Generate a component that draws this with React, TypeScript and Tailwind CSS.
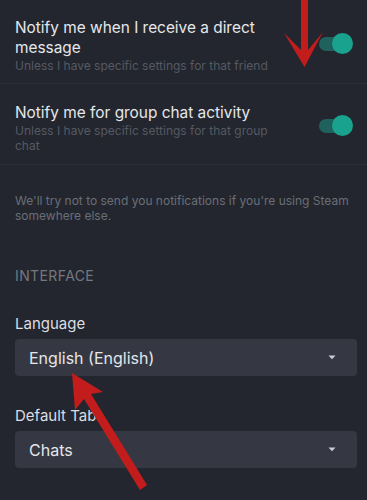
import React from "react";

function Toggle() {
  return (
    <div className="relative w-[34px] h-[22px] shrink-0">
      <div className="absolute left-0 top-[4px] w-[30px] h-[14px] rounded-full bg-[#1f615c]" />
      <div className="absolute right-0 top-0 w-[21px] h-[21px] rounded-full bg-[#19a28d]" />
    </div>
  );
}

function Chevron() {
  return (
    <svg width="8" height="5" viewBox="0 0 8 5" className="shrink-0">
      <path d="M0.5 0.5 L4 4.2 L7.5 0.5 Z" fill="#c9ccd2" />
    </svg>
  );
}

function Select({ label }: { label: string }) {
  return (
    <div className="h-[37px] rounded-[4px] bg-[#353842] flex items-center justify-between pl-[14px] pr-[21px]">
      <span className="text-[16px] text-[#e4e6ea]">{label}</span>
      <Chevron />
    </div>
  );
}

export default function App() {
  return (
    <div
      className="relative w-[367px] h-[500px] overflow-hidden bg-[#23262e]"
      style={{ fontFamily: 'Inter, "Noto Sans", sans-serif' }}
    >
      <div className="flex flex-col">
        <div className="flex items-start justify-between pl-[15px] pr-[14px] pt-[18px] pb-[10px] border-b border-[#2c2f37]">
          <div className="flex flex-col w-[290px]">
            <div className="text-[15.4px] leading-[20px] text-[#e6e7ea]">Notify me when I receive a direct message</div>
            <div className="text-[12px] leading-[15px] text-[#555962]">Unless I have specific settings for that friend</div>
          </div>
          <div className="mt-[15px]"><Toggle /></div>
        </div>
        <div className="flex items-start justify-between pl-[15px] pr-[14px] pt-[19px] pb-[11px] border-b border-[#2c2f37]">
          <div className="flex flex-col w-[262px]">
            <div className="text-[15.4px] leading-[20px] text-[#e6e7ea]">Notify me for group chat activity</div>
            <div className="text-[12px] leading-[15px] text-[#555962]">Unless I have specific settings for that group chat</div>
          </div>
          <div className="mt-[12px]"><Toggle /></div>
        </div>
        <div className="px-[15px] pt-[28px] text-[12px] leading-[15px] text-[#6a6e77]">
          We'll try not to send you notifications if you're using Steam somewhere else.
        </div>
        <div className="px-[15px] pt-[44px] text-[14px] leading-[18px] text-[#74787f] tracking-[0.4px]">INTERFACE</div>
        <div className="px-[15px] pt-[29px] text-[15px] leading-[20px] text-[#dcdee2]">Language</div>
        <div className="pl-[15px] pr-[10px] pt-[5px]"><Select label="English (English)" /></div>
        <div className="px-[15px] pt-[30px] text-[15px] leading-[20px] text-[#dcdee2]">Default Tab</div>
        <div className="pl-[15px] pr-[10px] pt-[5px]"><Select label="Chats" /></div>
      </div>

      <svg className="absolute inset-0 pointer-events-none" width="367" height="500" viewBox="0 0 367 500">
        <path d="M301 0 L308 0 L308 50 L323 32 L304.5 67 L284 33 L301 50 Z" fill="#c21d1c" />
        <path d="M72 373 L103 392 L91 394 L147 485 L140 490 L84 399 L75 410 Z" fill="#c21d1c" />
      </svg>
    </div>
  );
}
